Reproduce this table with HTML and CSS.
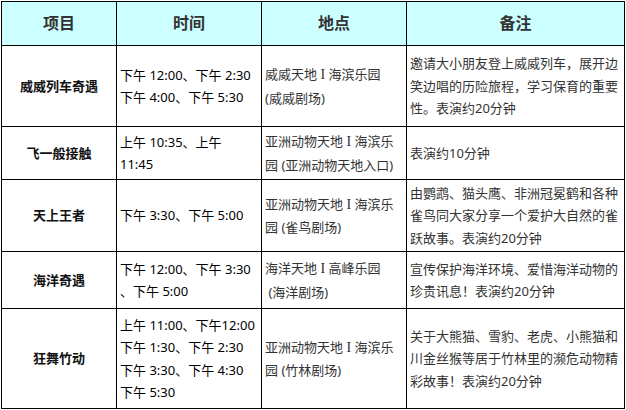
FILE: index.html
```html
<!DOCTYPE html>
<html lang="zh-CN">
<head>
<meta charset="utf-8">
<title>表演时间表</title>
<link rel="stylesheet" href="styles.css">
</head>
<body>
<table class="schedule">
  <colgroup>
    <col class="c-name">
    <col class="c-time">
    <col class="c-place">
    <col class="c-note">
  </colgroup>
  <thead>
    <tr class="r-head">
      <th>项目</th>
      <th>时间</th>
      <th>地点</th>
      <th>备注</th>
    </tr>
  </thead>
  <tbody>
    <tr class="r1">
      <td class="name">威威列车奇遇</td>
      <td class="time">下午 12:00、下午 2:30<br>下午 4:00、下午 5:30</td>
      <td class="place">威威天地 <span class="sep">I</span> 海滨乐园<br>(威威剧场)</td>
      <td class="note">邀请大小朋友登上威威列车，展开边<br>笑边唱的历险旅程，学习保育的重要<br>性。表演约20分钟</td>
    </tr>
    <tr class="r2">
      <td class="name">飞一般接触</td>
      <td class="time">上午 10:35、上午<br>11:45</td>
      <td class="place">亚洲动物天地 <span class="sep">I</span> 海滨乐<br>园 (亚洲动物天地入口)</td>
      <td class="note">表演约10分钟</td>
    </tr>
    <tr class="r3">
      <td class="name">天上王者</td>
      <td class="time">下午 3:30、下午 5:00</td>
      <td class="place">亚洲动物天地 <span class="sep">I</span> 海滨乐<br>园 (雀鸟剧场)</td>
      <td class="note">由鹦鹉、猫头鹰、非洲冠冕鹤和各种<br>雀鸟同大家分享一个爱护大自然的雀<br>跃故事。表演约20分钟</td>
    </tr>
    <tr class="r4">
      <td class="name">海洋奇遇</td>
      <td class="time">下午 12:00、下午 3:30<br>、下午 5:00</td>
      <td class="place">海洋天地 <span class="sep">I</span> 高峰乐园<br>&nbsp;(海洋剧场)</td>
      <td class="note">宣传保护海洋环境、爱惜海洋动物的<br>珍贵讯息！表演约20分钟</td>
    </tr>
    <tr class="r5">
      <td class="name">狂舞竹动</td>
      <td class="time">上午 11:00、下午12:00<br>下午 1:30、下午 2:30<br>下午 3:30、下午 4:30<br>下午 5:30</td>
      <td class="place">亚洲动物天地 <span class="sep">I</span> 海滨乐<br>园 (竹林剧场)</td>
      <td class="note">关于大熊猫、雪豹、老虎、小熊猫和<br>川金丝猴等居于竹林里的濒危动物精<br>彩故事！表演约20分钟</td>
    </tr>
  </tbody>
</table>
</body>
</html>
```

FILE: styles.css
```css
html, body {
  margin: 0;
  padding: 0;
  background: #ffffff;
}

body {
  padding: 1px 0 0 1px;
  font-family: "Noto Sans", "Noto Sans CJK SC", sans-serif;
  font-size: 13px;
  color: #000;
}

.schedule {
  border-collapse: collapse;
  table-layout: fixed;
  width: 623px;
}

.c-name { width: 115px; }
.c-time { width: 145px; }
.c-place { width: 145px; }
.c-note { width: 218px; }

.schedule th,
.schedule td {
  border: 1px solid #000;
  padding: 0 3px;
  vertical-align: middle;
  line-height: 22.4px;
  white-space: nowrap;
  overflow: hidden;
}

.schedule th {
  background: #ccffff;
  font-size: 16px;
  font-weight: bold;
  color: #333;
  text-align: center;
}

.r-head { height: 44px; }
.r1 { height: 81px; }
.r2 { height: 53px; }
.r3 { height: 72px; }
.r4 { height: 57px; }
.r5 { height: 100px; }

.name {
  text-align: center;
  font-weight: bold;
  color: #111;
}

.time {
  color: #000;
}

.place {
  color: #333;
}

.note {
  color: #333;
}

.sep {
  font-family: "Liberation Serif", serif;
  font-size: 14px;
}
```
